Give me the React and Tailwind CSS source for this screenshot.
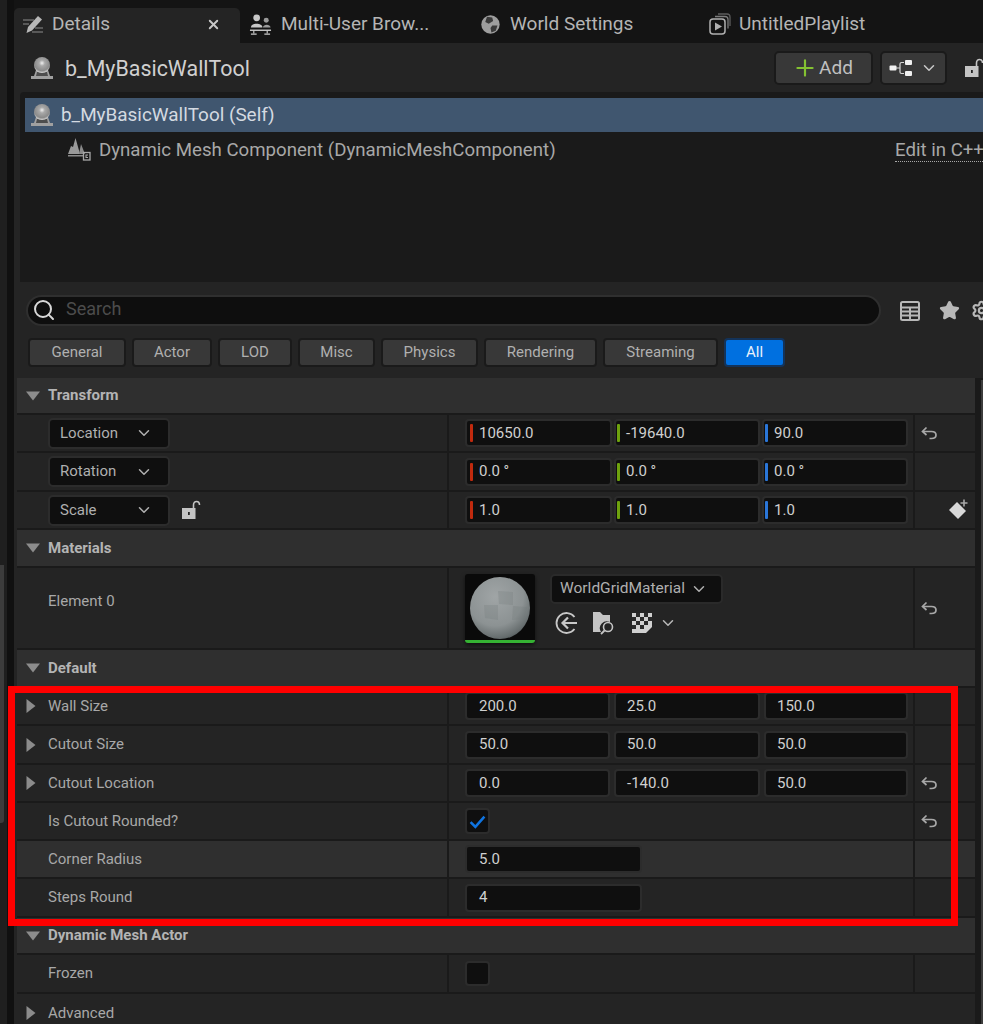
import { ChevronDown, Search, Star, Settings, Plus, X } from "lucide-react";

const FONT = "font-['Roboto',sans-serif]";

function ActorIcon(props) {
  return (
    <svg viewBox="0 0 24 24" className={props.className}>
      <defs>
        <radialGradient id={props.id} cx="0.5" cy="0.38" r="0.6">
          <stop offset="0" stopColor="#f0f0f0" />
          <stop offset="0.3" stopColor="#a8a8a8" />
          <stop offset="0.8" stopColor="#8a8a8a" />
          <stop offset="1" stopColor="#d0d0d0" />
        </radialGradient>
      </defs>
      <path d="M6 14 L18 14 L20 20 H23 V23 H1 V20 H4 Z" fill="#a0a0a0" />
      <path d="M7 16 H17 L18 20 H6 Z" fill="#2a2a2a" opacity="0.7" />
      <circle cx="12" cy="9" r="8" fill={`url(#${props.id})`} />
    </svg>
  );
}

function UndoIcon() {
  return (
    <svg viewBox="0 0 18 18" className="w-[18px] h-[18px]" fill="none" stroke="#a8a8a8" strokeWidth="1.7">
      <path d="M6.500 3.500 L2.500 7.500 L6.500 11" />
      <path d="M3 7.500 H11.500 C14.500 7.500 16 9.300 16 11 C16 12.800 14.500 14.500 11.500 14.500 H9.500" />
    </svg>
  );
}

function LockIcon() {
  return (
    <svg viewBox="0 0 20 20" className="w-5 h-5">
      <path d="M12.500 8 V5 C12.500 2.500 14 1.500 15.500 1.500 C17.200 1.500 18.500 2.800 18.500 5" fill="none" stroke="#c4c4c4" strokeWidth="1.600" />
      <path fillRule="evenodd" d="M1 8h13.500v11H1z M7 12v3h1.800v-3z" fill="#c4c4c4" />
    </svg>
  );
}

function Triangle(props) {
  if (props.open) {
    return (
      <svg viewBox="0 0 14 10" className="w-[14px] h-[10px]">
        <path d="M0 0.500h14L7 9.500z" fill="#8c8c8c" />
      </svg>
    );
  }
  return (
    <svg viewBox="0 0 10 14" className="w-[10px] h-[14px]">
      <path d="M0.500 0v14L9.500 7z" fill="#8c8c8c" />
    </svg>
  );
}

function Tab(props) {
  return (
    <div className={`flex items-center h-[35px] pb-[3px] text-[19px] text-[#b5b5b5] ${props.className}`}>
      {props.icon}
      <span>{props.label}</span>
      {props.children}
    </div>
  );
}

function Chip(props) {
  return (
    <div
      className={`h-[29px] flex items-center justify-center rounded-[4px] border-2 text-[15px] ${props.className} ${
        props.active
          ? "bg-[#0070e0] border-[#13335a] text-[#e8f1fb]"
          : "bg-[#383838] border-[#1a1a1a] text-[#b0b0b0]"
      }`}
    >
      {props.label}
    </div>
  );
}

function Field(props) {
  return (
    <div
      className={`h-[28px] flex items-center rounded-[4px] bg-[#0f0f0f] border-2 border-[#2c2c2c] text-[15px] text-[#d0d0d0] ${props.className}`}
    >
      {props.axis && <span className={`w-[3px] h-[18px] rounded-[1px] mr-[6px] ${props.axis}`} />}
      {props.value}
    </div>
  );
}

function Row(props) {
  return (
    <div
      className={`grid grid-cols-[430px_466px_62px] border-b-2 border-[#1a1a1a] ${props.h} ${
        props.hover ? "bg-[#2f2f2f]" : "bg-[#242424]"
      }`}
    >
      <div className={`flex items-center text-[15px] text-[#a8a8a8] min-w-0 ${props.labelClass || ""}`}>
        <div className="w-[31px] flex justify-center pr-[3px] shrink-0">
          {props.closed && <Triangle />}
        </div>
        {props.label}
      </div>
      <div className="border-l-2 border-[#1a1a1a] flex items-center pl-[16px]">
        {props.children}
      </div>
      <div className="border-l-2 border-[#1a1a1a] flex items-center pl-[5px] relative">
        {props.reset && <UndoIcon />}
        {props.extra}
      </div>
    </div>
  );
}

function SectionHeader(props) {
  return (
    <div className={`flex items-center bg-[#2f2f2f] border-b-2 border-[#1a1a1a] ${props.h}`}>
      <div className="w-[31px] flex justify-center shrink-0">
        <Triangle open={props.open} />
      </div>
      <span className="text-[15px] font-bold text-[#b4b4b4]">{props.label}</span>
    </div>
  );
}

function TransformRow(props) {
  return (
    <Row
      h={props.h}
      reset={props.reset}
      extra={props.extra}
      label={
        <div className="flex items-center">
          <div className="w-[122px] h-[31px] rounded-[5px] bg-[#0f0f0f] border-2 border-[#2c2c2c] flex items-center justify-between pl-[10px] pr-[15px] text-[15px] text-[#b0b0b0]">
            {props.label}
            <ChevronDown size={18} strokeWidth={2} />
          </div>
          {props.lock && <div className="ml-[11px]"><LockIcon /></div>}
        </div>
      }
    >
      <div className="flex gap-[2px]">
        <Field axis="bg-[#c12a0e]" value={props.values[0]} className="w-[147px] pl-[3px]" />
        <Field axis="bg-[#6ea20e]" value={props.values[1]} className="w-[146px] pl-[1px]" />
        <Field axis="bg-[#2a76d8]" value={props.values[2]} className="w-[146px] pl-[1px]" />
      </div>
    </Row>
  );
}

function TripleRow(props) {
  return (
    <Row h={props.h} label={props.label} closed reset={props.reset}>
      <div className="flex gap-[4px]">
        <Field value={props.values[0]} className="w-[145px] pl-[12px]" />
        <Field value={props.values[1]} className="w-[146px] pl-[11px]" />
        <Field value={props.values[2]} className="w-[144px] pl-[11px]" />
      </div>
    </Row>
  );
}

function MaterialThumb() {
  return (
    <div className="w-[70px] h-[69px] bg-[#0a0a0a] rounded-[3px] border-b-[3px] border-[#35b233] flex justify-center pt-[3px] shadow-[0_2px_4px_#0009]">
      <svg viewBox="0 0 60 62" className="w-[60px] h-[62px]">
        <defs>
          <radialGradient id="ball" cx="0.42" cy="0.32" r="0.78">
            <stop offset="0" stopColor="#a0a5a6" />
            <stop offset="0.6" stopColor="#8c9293" />
            <stop offset="0.85" stopColor="#666d6e" />
            <stop offset="1" stopColor="#3c4445" />
          </radialGradient>
        </defs>
        <ellipse cx="30" cy="31" rx="30" ry="31" fill="url(#ball)" />
        <path d="M28 14 L43 15 L43 28 L29 27 Z M14 28 L28 28 L28 43 L15 41 Z M43 29 L57 30 L54 42 L42 43 Z" fill="#6f7677" opacity="0.25" />
      </svg>
    </div>
  );
}

export default function App() {
  return (
    <div className={`relative w-[983px] h-[1024px] overflow-hidden bg-[#141414] flex ${FONT}`}>
      {/* left gutter with the neighbouring panel's scrollbar */}
      <div className="w-[14px] shrink-0 bg-[#1f1f1f] border-r-[7px] border-[#101010] flex flex-col pt-[565px]">
        <div className="w-[4px] h-[258px] rounded-br-[3px] bg-[#3c3c3c]" />
      </div>

      <div className="flex-1 min-w-0 flex flex-col">
        {/* tabs */}
        <div className="h-[43px] shrink-0 pt-[8px] flex bg-[#141414]">
          <Tab
            className="w-[226px] bg-[#242424] rounded-t-[5px] pl-[7px]"
            label="Details"
            icon={
              <svg viewBox="0 0 24 24" className="w-[24px] h-[24px] mr-[7px]">
                <path d="M7 15 L17 4 L21 7.500 L11 18.500 L5.500 21 Z" fill="#b8b8b8" />
                <path d="M2 8h11M2 12h6M11 20h11M14 16h8" stroke="#8c8c8c" strokeWidth="1.200" />
              </svg>
            }
          >
            <X size={15} strokeWidth={3} className="ml-auto mr-[19px] text-[#c8c8c8]" />
          </Tab>
          <Tab
            className="ml-[9px] w-[223px]"
            label="Multi-User Brow..."
            icon={
              <svg viewBox="0 0 24 24" className="w-[23px] h-[23px] mr-[9px]">
                <circle cx="8" cy="5" r="3.500" fill="#c8c8c8" />
                <path d="M2 15 C2 10 14 10 14 15 Z" fill="#c8c8c8" />
                <circle cx="18" cy="7.500" r="2.600" fill="#9a9a9a" />
                <path d="M14.500 15 C15 11.500 22 11.500 22.500 15 Z" fill="#9a9a9a" />
                <path d="M1 18h22" stroke="#c8c8c8" strokeWidth="1.500" />
                <path d="M5 18v3M19 18v3M2 22h6M16 22h6" stroke="#c8c8c8" strokeWidth="1.200" />
              </svg>
            }
          />
          <Tab
            className="ml-[8px] w-[228px]"
            label="World Settings"
            icon={
              <svg viewBox="0 0 24 24" className="w-[21px] h-[21px] mr-[9px]">
                <circle cx="12" cy="12" r="10.500" fill="#9e9e9e" />
                <path d="M8 3 L14 4 L15 8 L10 11 L6 9 Z M14 13 L20 13 L18 19 L13 21 L12 16 Z" fill="#3a3a3a" />
              </svg>
            }
          />
          <Tab
            label="UntitledPlaylist"
            icon={
              <svg viewBox="0 0 24 24" className="w-[24px] h-[24px] mr-[7px]" fill="none">
                <rect x="2" y="7" width="15" height="15" rx="3" stroke="#b0b0b0" strokeWidth="1.500" />
                <path d="M7 4.500h10a3 3 0 0 1 3 3v9" stroke="#7c7c7c" strokeWidth="1.300" />
                <path d="M10 2h9a3 3 0 0 1 3 3v9" stroke="#5c5c5c" strokeWidth="1.300" />
                <path d="M7 10.500 L14 14.500 L7 18.500 Z" fill="#b0b0b0" />
              </svg>
            }
          />
        </div>

        <div className="flex-1 bg-[#242424] min-h-0 flex flex-col">
          {/* actor header */}
          <div className="h-[49px] shrink-0 flex items-center pl-[16px]">
            <ActorIcon id="a1" className="w-[24px] h-[24px]" />
            <span className="ml-[11px] text-[21.4px] text-[#d0d0d0] pt-[4px]">b_MyBasicWallTool</span>
            <div className="ml-auto flex items-center">
              <div className="w-[99px] h-[34px] rounded-[5px] bg-[#383838] border-2 border-[#1a1a1a] flex items-center justify-center text-[19px] text-[#c0c0c0]">
                <Plus size={26} strokeWidth={2} className="text-[#84c232] mr-[1px] -ml-[2px]" />
                <span className="pt-[1px]">Add</span>
              </div>
              <div className="ml-[7px] w-[67px] h-[34px] rounded-[5px] bg-[#383838] border-2 border-[#1a1a1a] flex items-center justify-center gap-[7px] text-[#c8c8c8]">
                <svg viewBox="0 0 24 18" className="w-[24px] h-[18px]">
                  <path d="M7 9h4M15 3.500h-2.500a1.500 1.500 0 0 0-1.500 1.500v8a1.500 1.500 0 0 0 1.500 1.500H15" fill="none" stroke="#d8d8d8" strokeWidth="1.200" />
                  <rect x="0.500" y="6.500" width="7" height="5" rx="1" fill="#f0f0f0" />
                  <rect x="16" y="1" width="7" height="5" rx="1" fill="#f0f0f0" />
                  <rect x="16" y="12" width="7" height="5" rx="1" fill="#f0f0f0" />
                </svg>
                <ChevronDown size={18} strokeWidth={2} />
              </div>
              <div className="ml-[17px] w-[19px] overflow-hidden"><LockIcon /></div>
            </div>
          </div>

          {/* component tree */}
          <div className="h-[190px] shrink-0 ml-[6px] rounded-tl-[4px] bg-[#1a1a1a] pt-[6px] pl-[5px] overflow-hidden">
            <div className="h-[34px] bg-[#40566f] flex items-center pl-[5px] text-[18.9px] text-[#d4dae1]">
              <ActorIcon id="a2" className="w-[24px] h-[24px]" />
              <span className="ml-[7px] pt-[1px]">b_MyBasicWallTool (Self)</span>
            </div>
            <div className="h-[34px] flex items-center pl-[42px] text-[18.65px] text-[#a8a8a8]">
              <svg viewBox="0 0 24 24" className="w-[24px] h-[24px] mr-[8px] shrink-0">
                <path d="M8.500 1 L13 17 H1 L4 9 L6 10 Z" fill="#9a9a9a" />
                <path d="M14 7 L18 17 H12 Z" fill="#8a8a8a" />
                <path d="M1 18h15v1.500H1z" fill="#8a8a8a" />
                <rect x="16.500" y="15.500" width="6.500" height="7.500" fill="none" stroke="#a8a8a8" strokeWidth="1.300" />
                <path d="M21 18h-2v2.500h2" fill="none" stroke="#a8a8a8" strokeWidth="1.100" />
              </svg>
              <span className="whitespace-nowrap pt-[3px]">Dynamic Mesh Component (DynamicMeshComponent)</span>
              <span className="ml-auto mt-[3px] w-[88px] shrink-0 overflow-hidden whitespace-nowrap border-b border-dotted border-[#a8a8a8] leading-[21px]">
                Edit in C++
              </span>
            </div>
          </div>

          {/* search */}
          <div className="shrink-0 h-[96px] flex flex-col overflow-hidden">
            <div className="flex items-center pt-[13px]">
              <div className="ml-[12px] w-[855px] shrink-0 h-[31px] rounded-full bg-[#0e0e0e] border-2 border-[#2f2f2f] flex items-center pl-[4px] pb-[1px] text-[18px] text-[#4c4c4c]">
                <Search size={24} strokeWidth={2} className="text-[#d8d8d8] mr-[10px]" />
                <span className="-mt-[3px]">Search</span>
              </div>
              <svg viewBox="0 0 20 20" className="ml-[19px] w-[20px] h-[20px] shrink-0" fill="none" stroke="#b8b8b8" strokeWidth="2">
                <rect x="1" y="1" width="18" height="18" rx="1.500" />
                <path d="M1 6.500h18M1 10.500h18M1 14.500h18M10 6.500v12.500" />
              </svg>
              <Star size={21} fill="#b8b8b8" stroke="#b8b8b8" className="ml-[19px] shrink-0" />
              <Settings size={21} stroke="#b8b8b8" strokeWidth={2.500} className="ml-[11px] shrink-0" />
            </div>
            <div className="flex gap-[6px] mt-[12px] ml-[14px]">
              <Chip label="General" className="w-[98px]" />
              <Chip label="Actor" className="w-[80px]" />
              <Chip label="LOD" className="w-[74px]" />
              <Chip label="Misc" className="w-[77px]" />
              <Chip label="Physics" className="w-[97px]" />
              <Chip label="Rendering" className="w-[113px]" />
              <Chip label="Streaming" className="w-[115px]" />
              <Chip label="All" active className="w-[61px]" />
            </div>
          </div>

          {/* property list */}
          <div className="flex-1 min-h-0 flex bg-[#1a1a1a] ml-[3px] overflow-hidden">
            <div className="w-[958px] shrink-0 flex flex-col">
              <SectionHeader label="Transform" open h="h-[37px] shrink-0" />
              <TransformRow h="h-[38px] shrink-0" label="Location" values={["10650.0", "-19640.0", "90.0"]} reset />
              <TransformRow h="h-[39px] shrink-0" label="Rotation" values={["0.0 °", "0.0 °", "0.0 °"]} />
              <TransformRow
                h="h-[38px] shrink-0"
                label="Scale"
                lock
                values={["1.0", "1.0", "1.0"]}
                extra={
                  <svg viewBox="0 0 22 22" className="absolute left-[32px] w-[22px] h-[22px]">
                    <path d="M10 3 L19 12 L11 20 L2 11 Z" fill="#d8d8d8" />
                    <path d="M17 0v8M13 4h8" stroke="#242424" strokeWidth="4" />
                    <path d="M17 0.500v7M13.500 4h7" stroke="#a8a8a8" strokeWidth="1.600" />
                  </svg>
                }
              />
              <SectionHeader label="Materials" open h="h-[38px] shrink-0" />
              <Row h="h-[82px] shrink-0" label="Element 0" labelClass="pb-[13px]" reset>
                <div className="flex">
                  <MaterialThumb />
                  <div className="ml-[15px] flex flex-col">
                    <div className="w-[173px] h-[30px] rounded-[5px] bg-[#0f0f0f] border-2 border-[#2a2a2a] flex items-center pl-[8px] text-[15.5px] text-[#b0b0b0]">
                      WorldGridMaterial
                      <ChevronDown size={18} strokeWidth={2} className="ml-[5px]" />
                    </div>
                    <div className="flex items-center mt-[7px] pl-[5px]">
                      <svg viewBox="0 0 24 24" className="w-[24px] h-[24px]" fill="none" stroke="#c8c8c8" strokeWidth="1.800">
                        <path d="M19.500 6 A10 10 0 1 0 19.500 18" />
                        <path d="M22 12 H8 M13 6.500 L7.500 12 L13 17.500" strokeWidth="2.200" />
                      </svg>
                      <svg viewBox="0 0 24 24" className="ml-[13px] w-[24px] h-[24px]">
                        <path d="M1 1h7l3 3h7v7a7 7 0 0 0-9 10H1z" fill="#c4c4c4" />
                        <circle cx="16" cy="16" r="4.500" fill="none" stroke="#c4c4c4" strokeWidth="1.600" />
                        <path d="M12.500 19.500 L9 23" stroke="#c4c4c4" strokeWidth="1.800" />
                      </svg>
                      <svg viewBox="0 0 22 22" className="ml-[15px] w-[22px] h-[22px]">
                        <path d="M1 1h20v14l-6 6H1z" fill="#d0d0d0" />
                        <path d="M5 1h4v4H5z M13 1h4v4h-4z M1 5h4v4H1z M9 5h4v4H9z M17 5h4v4h-4z M5 9h4v4H5z M13 9h4v4h-4z M1 13h4v4H1z M9 13h4v4H9z" fill="#2a2a2a" />
                      </svg>
                      <ChevronDown size={18} strokeWidth={2} className="ml-[6px] text-[#b8b8b8]" />
                    </div>
                  </div>
                </div>
              </Row>
              <SectionHeader label="Default" open h="h-[38px] shrink-0" />
              <TripleRow h="h-[38px] shrink-0" label="Wall Size" values={["200.0", "25.0", "150.0"]} />
              <TripleRow h="h-[39px] shrink-0" label="Cutout Size" values={["50.0", "50.0", "50.0"]} />
              <TripleRow h="h-[38px] shrink-0" label="Cutout Location" values={["0.0", "-140.0", "50.0"]} reset />
              <Row h="h-[38px] shrink-0" label="Is Cutout Rounded?" reset>
                <div className="w-[25px] h-[26px] rounded-[4px] bg-[#0f0f0f] border-2 border-[#2c2c2c] flex items-center justify-center">
                  <svg viewBox="0 0 16 16" className="w-[17px] h-[17px]" fill="none" stroke="#0f74e0" strokeWidth="2.400">
                    <path d="M1.500 8.500 L6 13 L14.500 3.500" />
                  </svg>
                </div>
              </Row>
              <Row h="h-[38px] shrink-0" label="Corner Radius" hover>
                <Field value="5.0" className="w-[177px] pl-[12px]" />
              </Row>
              <Row h="h-[39px] shrink-0" label="Steps Round">
                <Field value="4" className="w-[177px] pl-[12px]" />
              </Row>
              <SectionHeader label="Dynamic Mesh Actor" open h="h-[37px] shrink-0" />
              <Row h="h-[39px] shrink-0" label="Frozen">
                <div className="w-[25px] h-[25px] rounded-[4px] bg-[#0f0f0f] border-2 border-[#2c2c2c]" />
              </Row>
              <div className="h-[38px] shrink-0 bg-[#242424] flex items-center text-[15px] text-[#a8a8a8]">
                <div className="w-[31px] flex justify-center pr-[3px]"><Triangle /></div>
                Advanced
              </div>
            </div>
            {/* panel scrollbar */}
            <div className="ml-[6px] mt-[2px] w-[2px] bg-[#3c3c3c]" />
          </div>
        </div>
      </div>

      {/* red annotation drawn over the screenshot */}
      <div className="absolute left-[8px] top-[686px] w-[950px] h-[240px] border-[7px] border-[#ff0000] pointer-events-none" />
    </div>
  );
}
